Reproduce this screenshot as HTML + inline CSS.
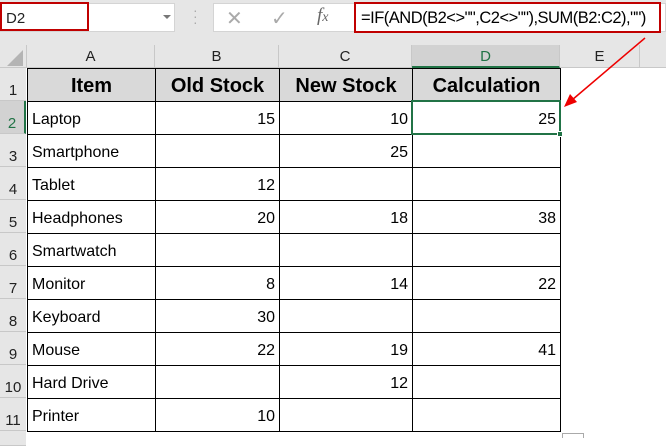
<!DOCTYPE html>
<html><head><meta charset="utf-8"><style>
*{margin:0;padding:0;box-sizing:border-box}
body{width:666px;height:438px;overflow:hidden;background:#fff;font-family:"Liberation Sans",Arial,sans-serif;position:relative}
.a{position:absolute}
.top{left:0;top:0;width:666px;height:45px;background:#e6e6e6}
.nb{left:0;top:3px;width:175px;height:29px;background:#fff;border:1px solid #d4d4d4}
.fb{left:213px;top:3px;width:453px;height:29px;background:#fff;border:1px solid #d4d4d4}
.red1{left:0;top:2px;width:89px;height:29px;border:2px solid #c00000;font-size:15px;padding:6px 0 0 4px;color:#222}
.red2{left:354px;top:2px;width:307px;height:31px;border:2px solid #c00000;font-size:16.5px;padding:5px 0 0 5px;color:#000;background:#fff;white-space:nowrap;letter-spacing:-0.5px}
.ch{top:45px;height:23px;background:#e6e6e6;border-right:1px solid #c8c8c8;border-bottom:1px solid #c8c8c8;text-align:center;font-size:15px;line-height:23px;color:#222}
.rh{left:0;width:26px;height:33px;background:#e6e6e6;border-bottom:1px solid #c8c8c8;font-size:15px;text-align:center;padding-top:14px;color:#222}
table{position:absolute;left:27px;top:68px;border-collapse:collapse}
td{border:1px solid #000;height:33px;font-size:16px;padding:8px 4px 0;white-space:nowrap;vertical-align:top;line-height:20px}
td.n{text-align:right}
tr.h td{background:#d9d9d9;font-weight:bold;font-size:20px;text-align:center;padding-top:7px}
</style></head><body>
<div class="a top"></div>
<div class="a nb"></div>
<div class="a" style="left:163px;top:15px;width:0;height:0;border-left:4px solid transparent;border-right:4px solid transparent;border-top:4px solid #777"></div>
<div class="a red1">D2</div>
<div class="a" style="left:193px;top:7px;color:#aaa;font-size:14px;line-height:6px">·<br>·<br>·</div>
<div class="a fb"></div>
<div class="a" style="left:226px;top:6px;font-size:20px;color:#aaa">✕</div>
<div class="a" style="left:271px;top:6px;font-size:20px;color:#aaa">✓</div>
<div class="a" style="left:317px;top:5px;font-size:19px;color:#666;font-style:italic;font-family:'Liberation Serif',serif">f<span style="font-size:14px">x</span></div>
<div class="a red2">=IF(AND(B2&lt;&gt;"",C2&lt;&gt;""),SUM(B2:C2),"")</div>
<div class="a ch" style="left:0;width:27px"></div>
<div class="a" style="left:7px;top:50px;width:0;height:0;border-left:16px solid transparent;border-bottom:16px solid #b4b4b4"></div>
<div class="a ch" style="left:27px;width:128px">A</div>
<div class="a ch" style="left:155px;width:124px">B</div>
<div class="a ch" style="left:279px;width:133px">C</div>
<div class="a ch" style="left:412px;width:148px;background:#d2d2d2;color:#217346;border-bottom:2px solid #217346">D</div>
<div class="a ch" style="left:560px;width:80px">E</div>
<div class="a ch" style="left:640px;width:26px;border-right:none"></div>
<div class="a rh" style="top:68px;height:33px">1</div>
<div class="a rh" style="top:101px;background:#d2d2d2;color:#217346;border-right:2px solid #217346">2</div>
<div class="a rh" style="top:134px">3</div>
<div class="a rh" style="top:167px">4</div>
<div class="a rh" style="top:200px">5</div>
<div class="a rh" style="top:233px">6</div>
<div class="a rh" style="top:266px">7</div>
<div class="a rh" style="top:299px">8</div>
<div class="a rh" style="top:332px">9</div>
<div class="a rh" style="top:365px">10</div>
<div class="a rh" style="top:398px">11</div>
<div class="a rh" style="top:431px;height:7px"></div>
<table>
<colgroup><col style="width:128px"><col style="width:124px"><col style="width:133px"><col style="width:148px"></colgroup>
<tr class="h"><td>Item</td><td>Old Stock</td><td>New Stock</td><td>Calculation</td></tr>
<tr><td>Laptop</td><td class="n">15</td><td class="n">10</td><td class="n">25</td></tr>
<tr><td>Smartphone</td><td></td><td class="n">25</td><td></td></tr>
<tr><td>Tablet</td><td class="n">12</td><td></td><td></td></tr>
<tr><td>Headphones</td><td class="n">20</td><td class="n">18</td><td class="n">38</td></tr>
<tr><td>Smartwatch</td><td></td><td></td><td></td></tr>
<tr><td>Monitor</td><td class="n">8</td><td class="n">14</td><td class="n">22</td></tr>
<tr><td>Keyboard</td><td class="n">30</td><td></td><td></td></tr>
<tr><td>Mouse</td><td class="n">22</td><td class="n">19</td><td class="n">41</td></tr>
<tr><td>Hard Drive</td><td></td><td class="n">12</td><td></td></tr>
<tr><td>Printer</td><td class="n">10</td><td></td><td></td></tr>
</table>
<div class="a" style="left:411px;top:100px;width:150px;height:35px;border:2px solid #217346"></div>
<div class="a" style="left:557px;top:131px;width:6px;height:6px;background:#217346;border:1px solid #fff"></div>
<div class="a" style="left:562px;top:433px;width:22px;height:5px;border:1px solid #aaa;border-bottom:none"></div>
<svg class="a" style="left:0;top:0" width="666" height="438">
<line x1="645" y1="38" x2="572" y2="100" stroke="#e00" stroke-width="1.5"/>
<polygon points="564,107 570,94 577,102" fill="#e00"/>
</svg>
</body></html>
